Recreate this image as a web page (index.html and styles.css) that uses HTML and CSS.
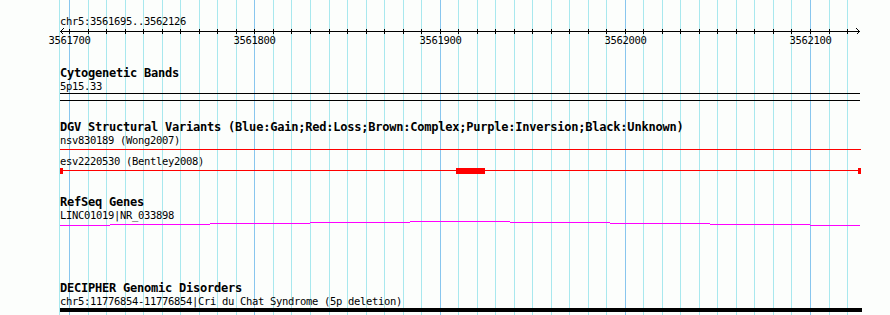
FILE: index.html
```html
<!DOCTYPE html>
<html lang="en">
<head>
    <meta charset="UTF-8">
    <title>chr5:3561695..3562126</title>
    <link rel="stylesheet" href="styles.css">
</head>
<body>
    <div class="browser">
        <!-- 10bp grid, every 100bp a darker line -->
        <svg class="grid" width="860" height="315" viewBox="0 0 860 315">
            <path class="grid-minor" d="M59.5 0V315 M88.5 0V315 M106.5 0V315 M125.5 0V315 M143.5 0V315 M162.5 0V315 M180.5 0V315 M199.5 0V315 M217.5 0V315 M236.5 0V315 M273.5 0V315 M291.5 0V315 M310.5 0V315 M329.5 0V315 M347.5 0V315 M366.5 0V315 M384.5 0V315 M403.5 0V315 M421.5 0V315 M458.5 0V315 M477.5 0V315 M495.5 0V315 M514.5 0V315 M532.5 0V315 M551.5 0V315 M569.5 0V315 M588.5 0V315 M606.5 0V315 M643.5 0V315 M662.5 0V315 M680.5 0V315 M699.5 0V315 M717.5 0V315 M736.5 0V315 M754.5 0V315 M773.5 0V315 M791.5 0V315 M829.5 0V315 M847.5 0V315"/>
            <path class="grid-major" d="M69.5 0V315 M254.5 0V315 M440.5 0V315 M625.5 0V315 M810.5 0V315"/>
        </svg>

        <div class="tracks">
            <!-- Ruler -->
            <div class="ruler">
                <div class="locus">chr5:3561695..3562126</div>
                <svg class="axis" width="802" height="9" viewBox="0 0 802 9">
                    <path d="M0 4.5H800 M3.5 1.5L0.5 4.5L3.5 7.5 M796.5 1.5L799.5 4.5L796.5 7.5"/>
                    <path d="M9.5 2V7 M28.5 2V7 M46.5 2V7 M65.5 2V7 M83.5 2V7 M102.5 2V7 M120.5 2V7 M139.5 2V7 M157.5 2V7 M176.5 2V7 M194.5 2V7 M213.5 2V7 M231.5 2V7 M250.5 2V7 M269.5 2V7 M287.5 2V7 M306.5 2V7 M324.5 2V7 M343.5 2V7 M361.5 2V7 M380.5 2V7 M398.5 2V7 M417.5 2V7 M435.5 2V7 M454.5 2V7 M472.5 2V7 M491.5 2V7 M509.5 2V7 M528.5 2V7 M546.5 2V7 M565.5 2V7 M583.5 2V7 M602.5 2V7 M620.5 2V7 M639.5 2V7 M657.5 2V7 M676.5 2V7 M694.5 2V7 M713.5 2V7 M731.5 2V7 M750.5 2V7 M769.5 2V7 M787.5 2V7"/>
                </svg>
                <div class="tick-labels">
                    <span class="tick-label" style="left: 9.5px">3561700</span>
                    <span class="tick-label" style="left: 194.5px">3561800</span>
                    <span class="tick-label" style="left: 380.5px">3561900</span>
                    <span class="tick-label" style="left: 565.5px">3562000</span>
                    <span class="tick-label" style="left: 750.5px">3562100</span>
                </div>
            </div>

            <!-- Cytogenetic Bands -->
            <section class="track cyto">
                <h2 class="track-title">Cytogenetic Bands</h2>
                <div class="feat-label">5p15.33</div>
                <svg class="glyph" width="800" height="8" viewBox="0 0 800 8">
                    <path class="band" d="M0 0.5H800 M0 7.5H800"/>
                </svg>
            </section>

            <!-- DGV -->
            <section class="track dgv">
                <h2 class="track-title">DGV Structural Variants (Blue:Gain;Red:Loss;Brown:Complex;Purple:Inversion;Black:Unknown)</h2>
                <div class="feat-label">nsv830189 (Wong2007)</div>
                <svg class="glyph" width="802" height="9" viewBox="0 0 802 9">
                    <path class="loss" d="M0 3.5H801"/>
                </svg>
                <div class="feat-label">esv2220530 (Bentley2008)</div>
                <svg class="glyph" width="802" height="8" viewBox="0 0 802 8">
                    <path class="loss" d="M0 3.5H801"/>
                    <rect class="loss-box" x="0" y="1" width="3" height="6"/>
                    <rect class="loss-box" x="396" y="1" width="29" height="6"/>
                    <rect class="loss-box" x="798" y="1" width="3" height="6"/>
                </svg>
            </section>

            <!-- RefSeq -->
            <section class="track refseq">
                <h2 class="track-title">RefSeq Genes</h2>
                <div class="feat-label">LINC01019|NR_033898</div>
                <svg class="glyph" width="800" height="5" viewBox="0 0 800 5">
                    <path class="gene" d="M0 4.5H50 M50 3.5H150 M150 2.5H250 M250 1.5H350 M350 0.5H450 M450 1.5H550 M550 2.5H650 M650 3.5H750 M750 4.5H800"/>
                </svg>
            </section>

            <!-- DECIPHER -->
            <section class="track decipher">
                <h2 class="track-title">DECIPHER Genomic Disorders</h2>
                <div class="feat-label">chr5:11776854-11776854|Cri du Chat Syndrome (5p deletion)</div>
                <svg class="glyph" width="802" height="5" viewBox="0 0 802 5">
                    <rect class="disorder" x="0" y="1" width="802" height="4"/>
                </svg>
            </section>
        </div>
    </div>
</body>
</html>
```

FILE: styles.css
```css
body {
    margin: 0;
    background: #fcfefc;
}

.browser {
    position: relative;
    width: 890px;
    height: 315px;
    overflow: hidden;
    font-family: "DejaVu Sans Mono", "Liberation Mono", monospace;
    font-size: 10.5px;
    letter-spacing: -0.32px;
    line-height: 12px;
    color: #000;
}

.grid {
    position: absolute;
    left: 0;
    top: 0;
}

.grid path {
    fill: none;
    stroke-width: 1;
    shape-rendering: crispEdges;
}

.grid-minor { stroke: #a8e8ee; }
.grid-major { stroke: #88c6ee; }

.tracks {
    position: relative;
    padding-left: 60px;
}

svg path, svg rect {
    shape-rendering: crispEdges;
}

/* ruler */
.ruler {
    padding-top: 15px;
}

.locus {
    height: 12px;
}

.axis {
    display: block;
}

.axis path {
    fill: none;
    stroke: #000;
    stroke-width: 1;
}

.tick-labels {
    position: relative;
    height: 12px;
    margin-top: -2.5px;
}

.tick-label {
    position: absolute;
    top: 0;
    transform: translateX(-50%);
    white-space: nowrap;
}

/* tracks */
.track-title {
    margin: 0 0 1.2px;
    font-size: 12px;
    letter-spacing: -0.22px;
    font-weight: bold;
    line-height: 12px;
    white-space: nowrap;
}

.feat-label {
    white-space: nowrap;
}

.glyph {
    display: block;
}

.cyto { margin-top: 21.5px; }
.cyto .glyph { margin-top: 0.8px; }
.dgv { margin-top: 20px; }
.dgv .glyph:first-of-type { margin-top: -0.2px; }
.refseq { margin-top: 20.8px; }
.refseq .glyph { margin-top: -0.2px; }
.decipher { margin-top: 55.8px; }
.decipher .glyph { margin-top: -0.2px; }

.band {
    fill: none;
    stroke: #000;
}

.loss {
    fill: none;
    stroke: #f00;
}

.loss-box { fill: #f00; }

.gene {
    fill: none;
    stroke: #f0f;
}

.disorder { fill: #000; }
```
